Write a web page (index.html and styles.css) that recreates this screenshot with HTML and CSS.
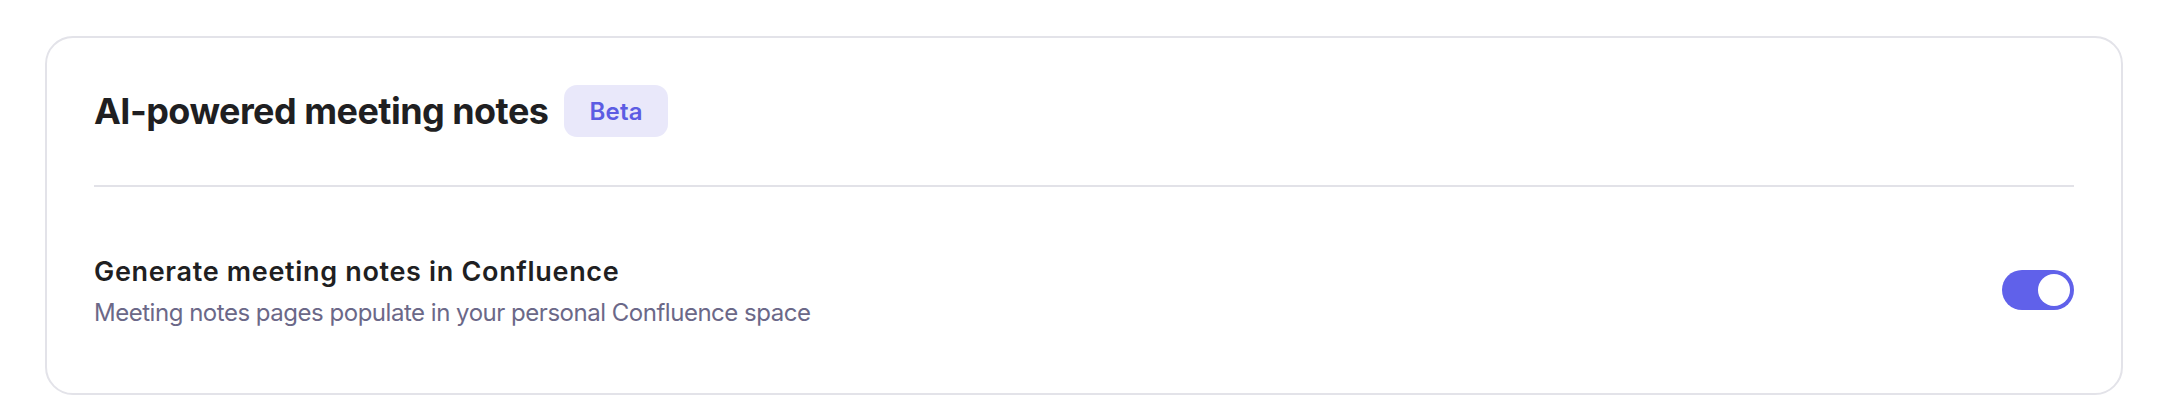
FILE: index.html
```html
<!DOCTYPE html>
<html lang="en">
<head>
<meta charset="utf-8">
<title>AI-powered meeting notes</title>
<link rel="stylesheet" href="styles.css">
</head>
<body>
<section class="card">
  <header class="card-header">
    <h2 class="card-title">AI-powered meeting notes</h2>
    <span class="badge">Beta</span>
  </header>
  <div class="divider"></div>
  <div class="setting">
    <div class="setting-text">
      <div class="setting-title">Generate meeting notes in Confluence</div>
      <div class="setting-desc">Meeting notes pages populate in your personal Confluence space</div>
    </div>
    <button class="toggle is-on" type="button" aria-pressed="true" aria-label="Generate meeting notes in Confluence">
      <span class="toggle-knob"></span>
    </button>
  </div>
</section>
</body>
</html>
```

FILE: styles.css
```css
html, body {
  margin: 0;
  background: #ffffff;
}

body {
  padding: 36px 45px 13px;
  font-family: Inter, "Noto Sans", "Liberation Sans", sans-serif;
  color: #1f1f22;
}

.card {
  border: 2px solid #e3e3e9;
  border-radius: 28px;
  background: #ffffff;
  padding: 47px 47px 50px;
}

.card-header {
  display: flex;
  align-items: center;
  gap: 16px;
  height: 52px;
}

.card-title {
  margin: 0;
  font-size: 36px;
  font-weight: 700;
  letter-spacing: -0.015em;
  line-height: 44px;
  color: #1f1f22;
}

.badge {
  display: inline-flex;
  align-items: center;
  justify-content: center;
  height: 52px;
  padding: 0 25px;
  border-radius: 13px;
  background: #e9e8fa;
  color: #5c5ce3;
  font-size: 24px;
  font-weight: 600;
  letter-spacing: 0.01em;
  box-sizing: border-box;
}

.divider {
  height: 2px;
  background: #e2e2e8;
  margin-top: 48px;
}

.setting {
  display: flex;
  align-items: center;
  justify-content: space-between;
  height: 106px;
  margin-top: 50px;
}

.setting-text {
  display: flex;
  flex-direction: column;
  padding-top: 5px;
}

.setting-title {
  font-size: 27px;
  font-weight: 600;
  line-height: 34px;
  letter-spacing: 0.025em;
  color: #1f1f22;
}

.setting-desc {
  margin-top: 6px;
  font-size: 24px;
  font-weight: 400;
  line-height: 36px;
  letter-spacing: -0.02em;
  color: #6b6888;
}

.toggle {
  display: flex;
  align-items: center;
  justify-content: flex-end;
  width: 72px;
  height: 40px;
  padding: 4px;
  border: 0;
  border-radius: 20px;
  background: #6061ea;
  box-sizing: border-box;
  cursor: pointer;
}

.toggle-knob {
  width: 32px;
  height: 32px;
  border-radius: 50%;
  background: #ffffff;
}
```
